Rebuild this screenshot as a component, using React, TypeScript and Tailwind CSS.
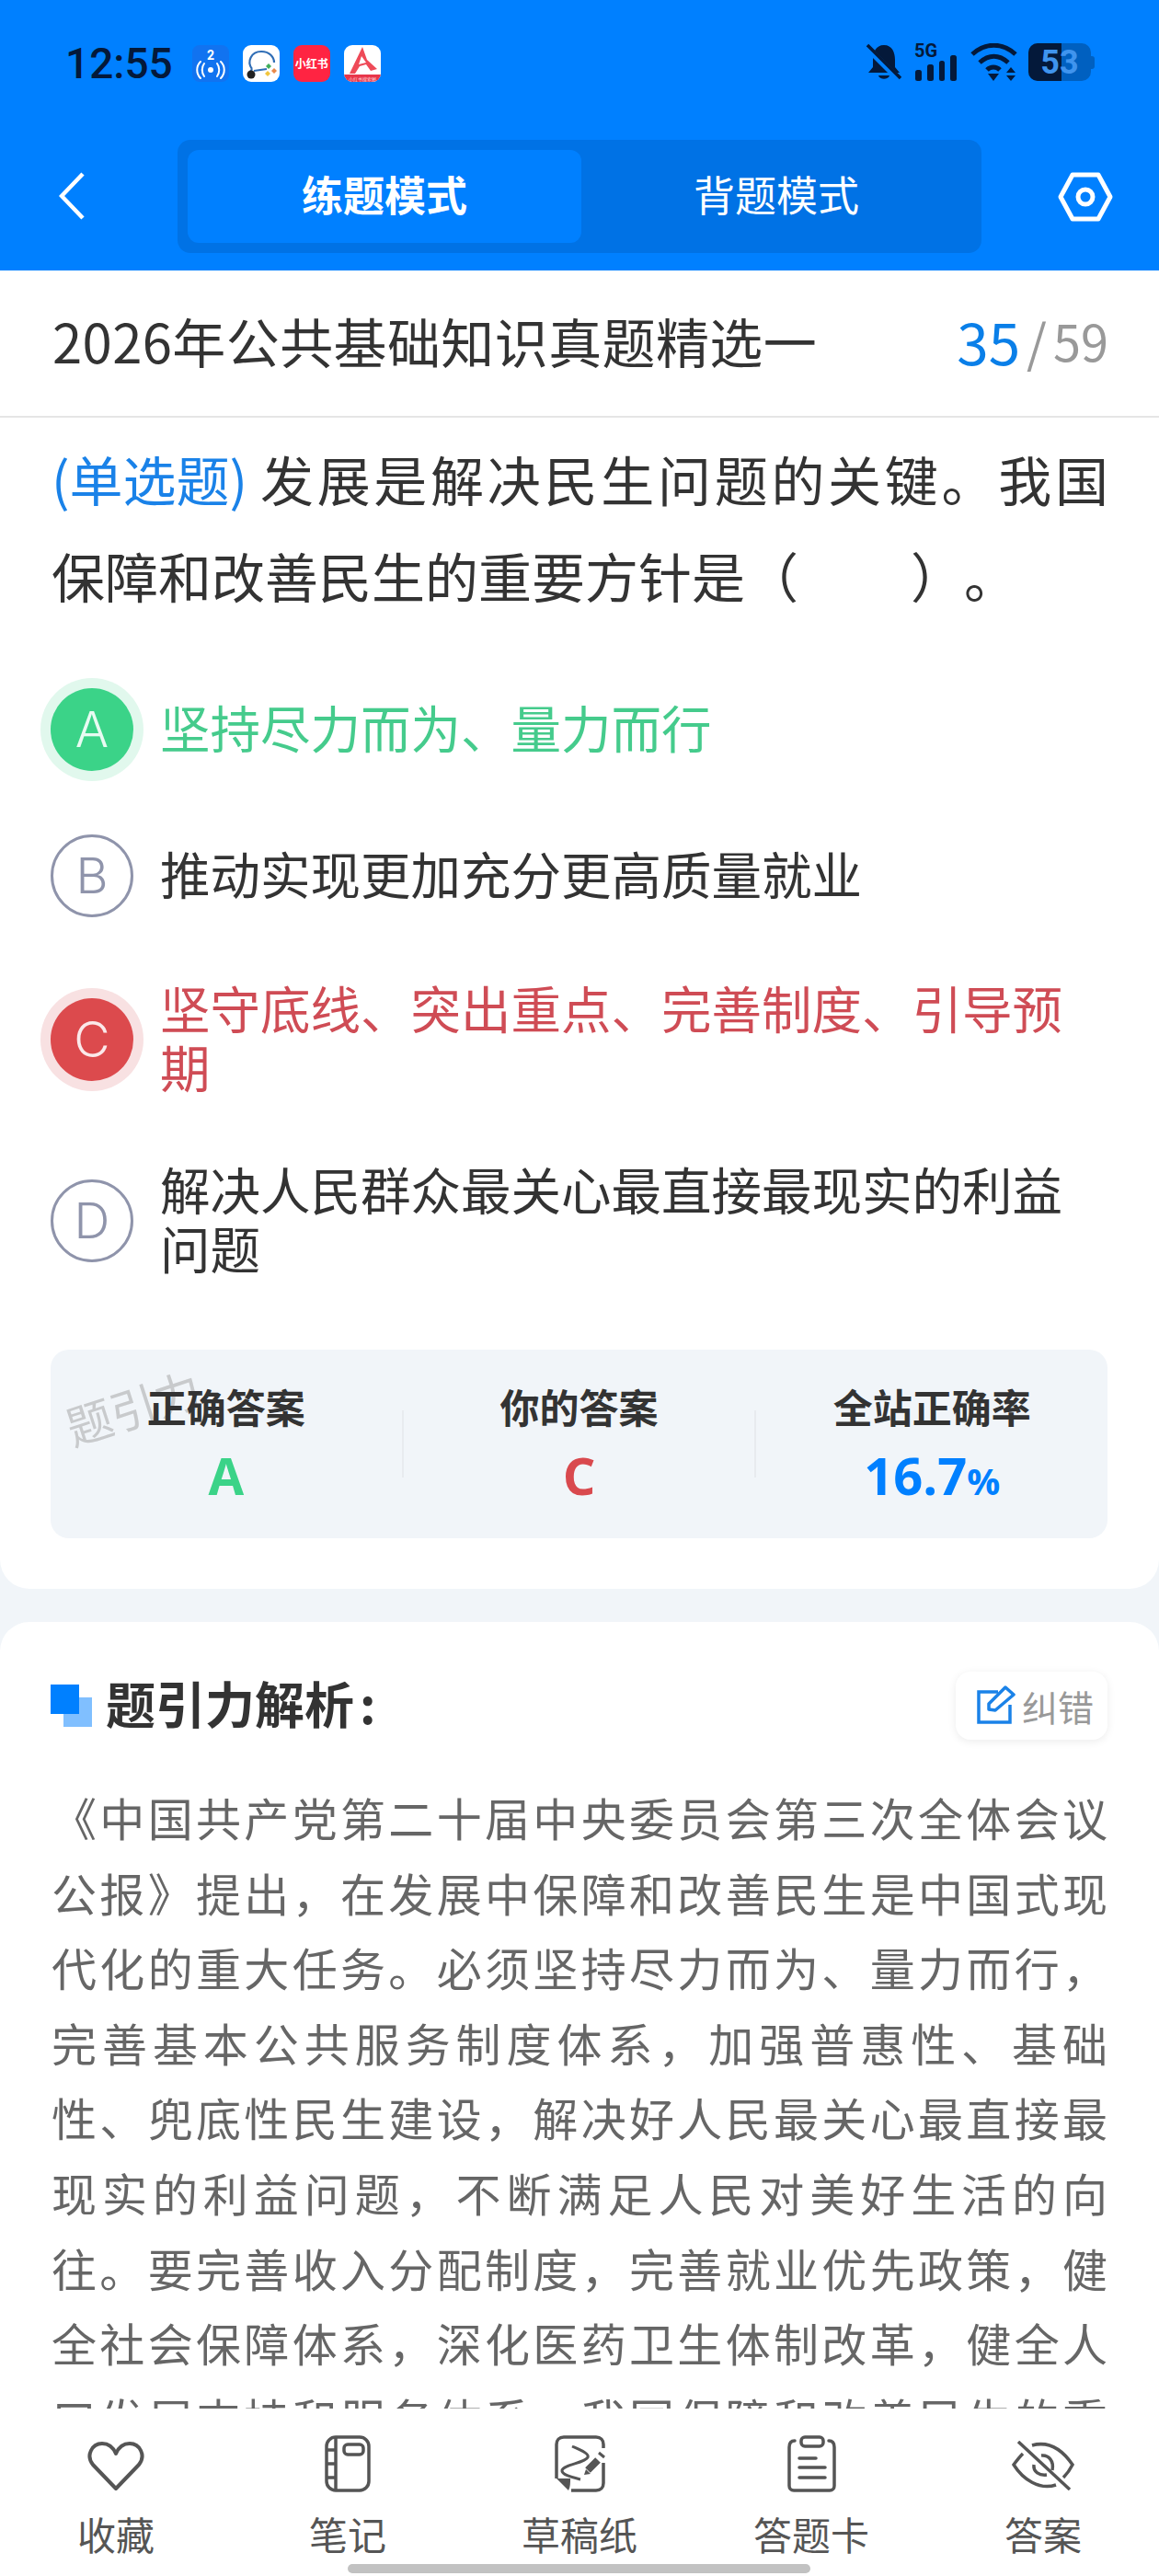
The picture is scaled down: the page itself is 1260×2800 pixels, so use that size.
import React from 'react';

const options = [
  { key: 'A', text: '坚持尽力而为、量力而行', state: 'right' },
  { key: 'B', text: '推动实现更加充分更高质量就业', state: 'idle' },
  { key: 'C', text: '坚守底线、突出重点、完善制度、引导预期', state: 'wrong' },
  { key: 'D', text: '解决人民群众最关心最直接最现实的利益问题', state: 'idle' },
];

const StatusIcons = () => (
  <div className="flex items-center gap-[15px] ml-[21px]">
    <svg width="40" height="40" viewBox="0 0 40 40" className="rounded-[8px] bg-[#1173f0]">
      <text x="20" y="16" textAnchor="middle" fontSize="14" fontWeight="700" fill="#fff" fontFamily="Roboto, sans-serif">2</text>
      <circle cx="20" cy="27" r="3" fill="#fff" />
      <path d="M13 20c-3 4-3 10 0 14M27 20c3 4 3 10 0 14M9 18c-5 5-5 13 0 18M31 18c5 5 5 13 0 18" stroke="#fff" strokeWidth="2" fill="none" strokeLinecap="round" />
    </svg>
    <svg width="40" height="40" viewBox="0 0 40 40" className="rounded-[9px] bg-white">
      <path d="M10 26C4 18 9 7 20 7c9 0 14 6 14 12M10 26l-2 3M12 28l14-2" stroke="#2f6db5" strokeWidth="2.2" fill="none" />
      <circle cx="9" cy="32" r="4.5" fill="#222" />
      <path d="M28 20l3 3-3 3-3-3z" fill="#3fae5a" />
      <path d="M34 25l3 3-3 3-3-3z" fill="#e8894a" />
      <path d="M27 28l3 3-3 3-3-3z" fill="#f2c53d" />
    </svg>
    <div className="w-[40px] h-[40px] rounded-[9px] bg-[#ff2442] flex items-center justify-center text-white text-[12px] font-bold leading-none whitespace-nowrap">小红书</div>
    <svg width="40" height="40" viewBox="0 0 40 40" className="rounded-[9px] bg-white">
      <path d="M20 2L6 31h6l5-8 7-2 5 7 7-2-11-10z" fill="#ee4a58" />
      <path d="M19 12l-3 9 8-2z" fill="#fff" />
      <path d="M0 32h40v1a7 7 0 0 1-7 7H7a7 7 0 0 1-7-7z" fill="#e8364a" />
      <text x="20" y="38.5" textAnchor="middle" fontSize="5" fill="#ffd9dd">小红书搜索图</text>
    </svg>
  </div>
);

const SystemIcons = () => (
  <div className="flex items-center">
    <svg width="38" height="41" viewBox="0 0 38 41" fill="#04193a">
      <path d="M19 2C10 2 7 10 7 18v8l-5 6h34l-5-6v-8C31 10 28 2 19 2z" />
      <path d="M13 35h12c-1 5-11 5-12 0z" />
      <path d="M0 4l36 36" stroke="#0080ff" strokeWidth="7" />
      <path d="M1 2l36 36" stroke="#04193a" strokeWidth="3.5" />
    </svg>
    <svg width="47" height="41" viewBox="0 0 47 41" fill="#04193a" className="ml-[14px] overflow-visible">
      <text x="0" y="15" fontSize="20" fontWeight="700" fontFamily="Roboto, sans-serif">5G</text>
      <rect x="1" y="29" width="7" height="12" rx="2.5" />
      <rect x="14" y="23" width="7" height="18" rx="2.5" />
      <rect x="27" y="19" width="6" height="22" rx="2.5" />
      <rect x="39" y="13" width="7" height="28" rx="2.5" />
    </svg>
    <svg width="51" height="41" viewBox="0 0 51 41" fill="#04193a" className="ml-[14px]">
      <path d="M2 12C16-1 35-1 49 12M10 21c10-9 21-9 31 0M18 29c4-4 10-4 14 0" stroke="#04193a" strokeWidth="5" fill="none" />
      <path d="M19 33h12l-6 8z" />
      <path d="M44 26l5 6H39zM39 35h10l-5 6z" />
    </svg>
    <div className="ml-[12px] flex items-center">
      <div className="w-[68px] h-[41px] rounded-[10px] bg-[#0060c0] overflow-hidden flex relative">
        <div className="w-[36px] h-full bg-[#04193a]" />
        <span className="absolute inset-0 flex items-center justify-center text-[#3f94ee] text-[36px] font-bold leading-none font-['Roboto',sans-serif]">53</span>
      </div>
      <div className="w-[4px] h-[14px] rounded-r-[3px] bg-[#0060c0]" />
    </div>
  </div>
);

const OptionRow = ({ item }: { item: (typeof options)[number] }) => {
  const badge =
    item.state === 'right'
      ? 'bg-[#3bd388] text-[#e8fbf2] shadow-[0_0_0_11px_#e1f8ed]'
      : item.state === 'wrong'
      ? 'bg-[#dc4a4d] text-[#fbe9ea] shadow-[0_0_0_11px_#f8e1e2]'
      : 'border-[3px] border-[#8f94ab] text-[#8f94ab]';
  const label = item.state === 'right' ? 'text-[#45cb8c]' : item.state === 'wrong' ? 'text-[#cf4c55]' : 'text-[#333333]';
  return (
    <div className="flex items-center">
      <div className={`w-[90px] h-[90px] shrink-0 rounded-full flex items-center justify-center text-[54px] font-light leading-none font-['Inter',sans-serif] ${badge}`}>
        {item.key}
      </div>
      <div className={`ml-[29px] flex-1 -translate-y-[3px] text-[54.5px] leading-[64px] ${label}`}>{item.text}</div>
    </div>
  );
};

const NavItem = ({ icon, label }: { icon: React.ReactNode; label: string }) => (
  <div className="flex-1 flex flex-col items-center">
    <div className="h-[64px] flex items-center justify-center">{icon}</div>
    <div className="mt-[19px] text-[42px] leading-[50px] text-[#555555]">{label}</div>
  </div>
);

export default function App() {
  return (
    <div lang="zh-CN" className="w-[1260px] h-[2800px] overflow-hidden relative flex flex-col bg-[#f1f5f9] [text-spacing-trim:space-all] font-['Noto_Sans_CJK_SC','Noto_Sans',sans-serif]">
      <header className="h-[294px] shrink-0 bg-[#0080ff]">
        <div className="h-[152px] pt-[47px] pl-[71px] pr-[70px] flex items-start justify-between">
          <div className="flex items-center">
            <span className="pt-[2px] text-[46px] leading-[41px] font-medium text-[#04193a] font-['Roboto',sans-serif]">12:55</span>
            <StatusIcons />
          </div>
          <SystemIcons />
        </div>
        <div className="flex items-center">
          <div className="w-[193px] pl-[64px] pb-[2px]">
            <svg width="28" height="52" viewBox="0 0 28 52" fill="none" stroke="#fff" strokeWidth="4.5">
              <path d="M26 2L3 26l23 24" />
            </svg>
          </div>
          <div className="w-[874px] h-[123px] p-[11px] rounded-[14px] bg-[#0072e5] flex">
            <div className="w-[428px] pb-[6px] rounded-[12px] bg-[#0080ff] flex items-center justify-center text-white text-[45px] font-bold">练题模式</div>
            <div className="flex-1 pb-[6px] flex items-center justify-center text-white text-[45px]">背题模式</div>
          </div>
          <div className="pl-[83px]">
            <svg width="60" height="54" viewBox="0 0 60 54" fill="none" stroke="#fff" strokeWidth="5" strokeLinejoin="round">
              <path d="M3 27L16 3h28l13 24-13 24H16z" />
              <circle cx="30" cy="27" r="8" />
            </svg>
          </div>
        </div>
      </header>

      <main className="flex-1 min-h-0 overflow-hidden">
        <section className="bg-white rounded-b-[32px] h-[1433px]">
          <div className="h-[160px] pb-[6px] pl-[57px] pr-[55px] flex items-center justify-between border-b-2 border-[#e5e5e5]">
            <div className="text-[58px] tracking-[0.4px] leading-none text-[#333333]">2026年公共基础知识真题精选一</div>
            <div className="flex items-center text-[#999999]">
              <span className="text-[62px] leading-none text-[#0a7fe8]">35</span>
              <span className="text-[56px] leading-none ml-[7px] mr-[7px]">/</span>
              <span className="text-[54px] leading-none">59</span>
            </div>
          </div>
          <div className="px-[55px]">
            <p className="pl-[1px] pt-[14px] text-[58px] leading-[105px] text-[#333333] text-justify">
              <span className="inline-block mr-[10px] text-[#1a82e8]">(单选题)</span>
              发展是解决民生问题的关键。我国保障和改善民生的重要方针是（　　<span className="ml-[6px]">）。</span>
            </p>
            <div className="mt-[70px] flex flex-col gap-[69px]">
              {options.map((item) => (
                <OptionRow key={item.key} item={item} />
              ))}
            </div>
            <div className="relative mt-[76px] h-[205px] w-[1149px] rounded-[20px] bg-[#f1f5f9] pt-[34px] flex items-start">
              <div className="absolute left-[14px] top-[36px] -rotate-[18deg] text-[50px] leading-none text-[#c8cacc] whitespace-nowrap">题引力</div>
              <div className="relative flex-1 flex flex-col items-center">
                <div className="text-[43px] leading-[54px] font-bold text-[#333333]">正确答案</div>
                <div className="mt-[16px] text-[56px] leading-[64px] font-bold text-[#3bd388] font-['Open_Sans',sans-serif]">A</div>
              </div>
              <div className="w-[2px] h-[73px] mt-[32px] bg-[#e8ebef]" />
              <div className="relative flex-1 flex flex-col items-center">
                <div className="text-[43px] leading-[54px] font-bold text-[#333333]">你的答案</div>
                <div className="mt-[16px] text-[56px] leading-[64px] font-bold text-[#d9494e] font-['Open_Sans',sans-serif]">C</div>
              </div>
              <div className="w-[2px] h-[73px] mt-[32px] bg-[#e8ebef]" />
              <div className="relative flex-1 flex flex-col items-center">
                <div className="text-[43px] leading-[54px] font-bold text-[#333333]">全站正确率</div>
                <div className="mt-[16px] text-[56px] leading-[64px] font-bold text-[#0080ff] font-['Open_Sans',sans-serif]">
                  16.7<span className="text-[40px]">%</span>
                </div>
              </div>
            </div>
          </div>
        </section>

        <section className="mt-[36px] bg-white rounded-t-[32px] pl-[55px] pr-[56px] pt-[54px] h-[1200px]">
          <div className="flex items-center justify-between h-[74px]">
            <div className="flex items-center">
              <svg width="46" height="47" viewBox="0 0 46 47">
                <rect x="14" y="14" width="31" height="32" fill="#80bfff" />
                <rect x="0" y="0" width="31" height="32" fill="#0080ff" />
              </svg>
              <div className="ml-[14px] pb-[6px] text-[54px] leading-none font-bold text-[#333333]">题引力解析<span className="ml-[6px]">:</span></div>
            </div>
            <div className="w-[165px] h-[74px] rounded-[16px] bg-white shadow-[0_2px_10px_rgba(0,0,0,0.08)] flex items-center pl-[22px]">
              <svg width="44" height="44" viewBox="0 0 44 44" fill="none" stroke="#1a82e8" strokeWidth="3.5">
                <path d="M24 7H3v33h34V21" />
                <path d="M14 26v-6L32 2l9 8-20 17z" strokeLinejoin="round" />
              </svg>
              <span className="ml-[6px] text-[39px] leading-none text-[#999999]">纠错</span>
            </div>
          </div>
          <p className="mt-[43px] pl-[1px] -mr-[3px] text-[49px] tracking-[3px] leading-[81.6px] text-[#666666] text-justify">
            《中国共产党第二十届中央委员会第三次全体会议公报》提出，在发展中保障和改善民生是中国式现代化的重大任务。必须坚持尽力而为、量力而行，完善基本公共服务制度体系，加强普惠性、基础性、兜底性民生建设，解决好人民最关心最直接最现实的利益问题，不断满足人民对美好生活的向往。要完善收入分配制度，完善就业优先政策，健全社会保障体系，深化医药卫生体制改革，健全人口发展支持和服务体系，我国保障和改善民生的重要方针是坚持尽力而为、量力而行。
          </p>
        </section>
      </main>

      <nav className="h-[182px] shrink-0 bg-white pt-[28px] flex">
        <NavItem
          label="收藏"
          icon={
            <svg width="62" height="54" viewBox="0 0 62 54" fill="none" stroke="#555" strokeWidth="4" strokeLinejoin="round" className="mt-[6px]">
              <path d="M31 51L6 25C-2 15 5 2 16 2c7 0 12 4 15 11C34 6 39 2 46 2c11 0 18 13 10 23z" />
            </svg>
          }
        />
        <NavItem
          label="笔记"
          icon={
            <svg width="50" height="62" viewBox="0 0 50 62" fill="none" stroke="#555" strokeWidth="3.5">
              <rect x="2" y="2" width="46" height="58" rx="10" />
              <path d="M12 2v58M2 16h10M2 31h10M2 46h10" />
              <rect x="21" y="10" width="21" height="11" rx="4" />
            </svg>
          }
        />
        <NavItem
          label="草稿纸"
          icon={
            <svg width="55" height="62" viewBox="0 0 55 62" fill="none" stroke="#555" strokeWidth="3.5">
              <path d="M53 14v-4c0-5-3-8-8-8H10c-5 0-8 3-8 8v37M18 60h27c5 0 8-3 8-8V30" />
              <path d="M2 47h15c0 5 0 9-2 13z" fill="#555" stroke="none" />
              <path d="M19 12c9 4 19 8 17 12-3 6-26 8-28 14-1 5 12 8 20 10" strokeWidth="3" />
              <path d="M36 38l11-11" strokeWidth="8" />
              <path d="M32 43l2-6 5 5z" fill="#555" stroke="none" />
              <path d="M48 19l6 5" strokeWidth="3" />
            </svg>
          }
        />
        <NavItem
          label="答题卡"
          icon={
            <svg width="53" height="62" viewBox="0 0 53 62" fill="none" stroke="#555" strokeWidth="3.5" strokeLinecap="round">
              <rect x="15" y="2" width="24" height="10" rx="4" />
              <path d="M8 6C4 6 2 8 2 13v42c0 3 2 5 5 5h39c3 0 5-2 5-5V13c0-5-2-7-6-7" />
              <path d="M13 25h18M13 35h28M13 46h28" />
            </svg>
          }
        />
        <NavItem
          label="答案"
          icon={
            <svg width="68" height="54" viewBox="0 0 68 54" fill="none" stroke="#555" strokeWidth="3.5" className="mt-[4px]">
              <path d="M7 1l56 52" />
              <path d="M22 5C40 0 55 10 66 26c-3 6-6 10-10 14M12 14c-4 4-7 8-10 12 10 16 28 28 46 22" />
              <path d="M32 16c8-1 14 6 12 16M24 26c-1 8 6 12 14 11" />
            </svg>
          }
        />
      </nav>
      <div className="absolute left-[378px] bottom-[3px] w-[503px] h-[10px] rounded-full bg-[#c2c2c2]" />
    </div>
  );
}
